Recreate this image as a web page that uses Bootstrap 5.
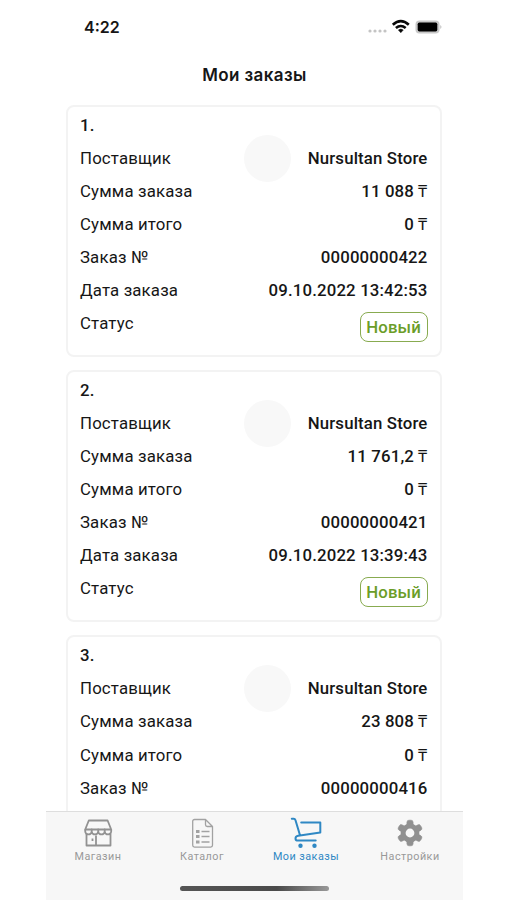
<!DOCTYPE html>
<html lang="ru">
<head>
<meta charset="utf-8">
<meta name="viewport" content="width=device-width, initial-scale=1">
<title>Мои заказы</title>
<link href="https://cdn.jsdelivr.net/npm/bootstrap@5.3.0/dist/css/bootstrap.min.css" rel="stylesheet">
<style>
body{background:#fff;color:#161616;font-family:Roboto,"Liberation Sans",sans-serif;overflow:hidden}
.phone{width:417px;height:900px;margin-left:46px}
.status-bar{height:54px;padding:0 21px 0 38px;font:600 16px/54px Inter,sans-serif}
.screen-title{height:50.5px;padding-bottom:9px;font:600 17px/42px Inter,sans-serif;letter-spacing:.4px}
.orders{padding:0 21px 0 19.5px;min-height:0}
.order{height:252px;margin-bottom:13.4px;border:2px solid #f3f3f3;border-radius:8px;padding:2px 12.5px 0 12.5px;font-size:16.8px;letter-spacing:.16px;line-height:33.1px;flex:none}
.order-row{height:33.1px;flex:none}
.order-row strong,.order-num{font-weight:500}
.avatar{width:47px;height:47px;background:#f8f8f8;margin:-7px 17px -7px 0}
.state{border:1.5px solid #88ab50;color:#6b9d28;border-radius:8px;height:30px;line-height:28px;padding:0 5.5px;margin-top:5px;font-weight:500}
.tabs{height:89px;background:#f7f7f7;border-top:1px solid #dedede}
.tab{width:104px;color:#999;font-size:10.8px;line-height:13px;letter-spacing:.48px;padding-top:4.5px}
.tab svg{display:block;height:32px;margin-bottom:1px}
.tab.current{color:#2f88c4}
.home-bar{width:149px;height:5px;background:linear-gradient(90deg,#555,#4a4a4a 65%,#999);margin-top:23.5px}
</style>
</head>
<body>
<main class="phone d-flex flex-column">
<header>
<div class="status-bar d-flex justify-content-between align-items-center"><span>4:22</span>
<svg width="75" height="18" viewBox="0 0 75 18"><g fill="#c4c4c4"><circle cx="3" cy="13" r="1.6"/><circle cx="8" cy="13" r="1.6"/><circle cx="13" cy="13" r="1.6"/><circle cx="18" cy="13" r="1.6"/></g><g fill="none" stroke="#080808" stroke-width="2.6"><path d="M25.8 6.8q8-7.2 16 0M28.9 10.1q4.900-4.200 9.800 0"/></g><path d="M31.300 12q2.500-2 5 0l-2.500 2.800z" fill="#080808" stroke="#080808" stroke-width=".4"/><rect x="48.500" y="2.500" width="24" height="13" rx="3.900" fill="#c8c8c8"/><rect x="50.700" y="4.600" width="19.600" height="8.800" rx="1.700" fill="#000"/><path d="M73.300 6.900q2.300 2 0 4z" fill="#bbb"/></svg></div>
<h1 class="screen-title text-center m-0">Мои заказы</h1>
</header>
<section class="orders flex-grow-1 overflow-hidden d-flex flex-column">
<article class="order">
<div class="order-row order-num">1.</div>
<div class="order-row d-flex"><span class="me-auto">Поставщик</span><span class="avatar rounded-circle"></span><strong>Nursultan Store</strong></div>
<div class="order-row d-flex justify-content-between"><span>Сумма заказа</span><strong>11 088 ₸</strong></div>
<div class="order-row d-flex justify-content-between"><span>Сумма итого</span><strong>0 ₸</strong></div>
<div class="order-row d-flex justify-content-between"><span>Заказ №</span><strong>00000000422</strong></div>
<div class="order-row d-flex justify-content-between"><span>Дата заказа</span><strong>09.10.2022 13:42:53</strong></div>
<div class="order-row d-flex justify-content-between"><span>Статус</span><span class="state">Новый</span></div>
</article>
<article class="order">
<div class="order-row order-num">2.</div>
<div class="order-row d-flex"><span class="me-auto">Поставщик</span><span class="avatar rounded-circle"></span><strong>Nursultan Store</strong></div>
<div class="order-row d-flex justify-content-between"><span>Сумма заказа</span><strong>11 761,2 ₸</strong></div>
<div class="order-row d-flex justify-content-between"><span>Сумма итого</span><strong>0 ₸</strong></div>
<div class="order-row d-flex justify-content-between"><span>Заказ №</span><strong>00000000421</strong></div>
<div class="order-row d-flex justify-content-between"><span>Дата заказа</span><strong>09.10.2022 13:39:43</strong></div>
<div class="order-row d-flex justify-content-between"><span>Статус</span><span class="state">Новый</span></div>
</article>
<article class="order">
<div class="order-row order-num">3.</div>
<div class="order-row d-flex"><span class="me-auto">Поставщик</span><span class="avatar rounded-circle"></span><strong>Nursultan Store</strong></div>
<div class="order-row d-flex justify-content-between"><span>Сумма заказа</span><strong>23 808 ₸</strong></div>
<div class="order-row d-flex justify-content-between"><span>Сумма итого</span><strong>0 ₸</strong></div>
<div class="order-row d-flex justify-content-between"><span>Заказ №</span><strong>00000000416</strong></div>
</article>
</section>
<footer class="tabs flex-shrink-0 d-flex flex-column align-items-center">
<nav class="d-flex w-100">
<div class="tab d-flex flex-column align-items-center"><svg width="32" viewBox="0 0 32 32" fill="none" stroke="#929292" stroke-width="1.800" stroke-linejoin="round"><path d="M6.800 3.500h18.800l3.600 9H3.200zM4.500 16.500v12h24v-12M14 18.500v10"/><path d="M3.200 12.500v1.700a3.250 3.250 0 0 0 6.500 0v-1.700v1.700a3.250 3.250 0 0 0 6.500 0v-1.700v1.700a3.250 3.250 0 0 0 6.500 0v-1.700v1.700a3.250 3.250 0 0 0 6.500 0v-1.700"/><path d="M10.500 21.500v2.500"/></svg>Магазин</div>
<div class="tab d-flex flex-column align-items-center"><svg width="32" viewBox="0 0 32 32" fill="none" stroke="#a2a2a2" stroke-width="1.300" stroke-linejoin="round"><path d="M8.500 2.500h11l7 7v18.800a1.800 1.800 0 0 1-1.800 1.800H8.500a1.800 1.800 0 0 1-1.800-1.800V4.300a1.800 1.800 0 0 1 1.800-1.800zM19.500 2.500v5.200a1.800 1.800 0 0 0 1.800 1.800h5.200M15.500 14.500h8M15.500 19.500h8M15.500 25h8"/><path d="M10 14.500h3.500M10 19.500h3.500M10 25h3.500" stroke-width="3.200"/></svg>Каталог</div>
<div class="tab current d-flex flex-column align-items-center"><svg width="32" viewBox="0 0 32 32" fill="none" stroke="#2f88c4" stroke-width="2" stroke-linecap="round" stroke-linejoin="round"><path d="M1.800 1.800h1.900q1.300 0 1.800 1.500L10 18.300M11.200 5.400h19.100v10L8.200 18.700q-2.700.5-2.700 2.700 0 2.200 2.700 2.200h17.500"/><g fill="#2f88c4" stroke="none"><circle cx="10.500" cy="28.800" r="2.200"/><circle cx="24.500" cy="28.800" r="2.200"/></g></svg>Мои заказы</div>
<div class="tab d-flex flex-column align-items-center"><svg width="32" viewBox="0 0 32 32"><defs><path id="tooth" d="M12.900 10V5.500q0-2.300 2-2.300h2.200q2 0 2 2.300V10z" fill="#909090" stroke="#909090" stroke-width=".6" stroke-linejoin="round"/></defs><use href="#tooth"/><use href="#tooth" transform="rotate(60 16 16)"/><use href="#tooth" transform="rotate(120 16 16)"/><use href="#tooth" transform="rotate(180 16 16)"/><use href="#tooth" transform="rotate(240 16 16)"/><use href="#tooth" transform="rotate(300 16 16)"/><circle cx="16" cy="16" r="6.900" fill="none" stroke="#909090" stroke-width="5"/></svg>Настройки</div>
</nav>
<div class="home-bar rounded-pill"></div>
</footer>
</main>
<script src="https://cdn.jsdelivr.net/npm/bootstrap@5.3.0/dist/js/bootstrap.bundle.min.js"></script>
</body>
</html>
